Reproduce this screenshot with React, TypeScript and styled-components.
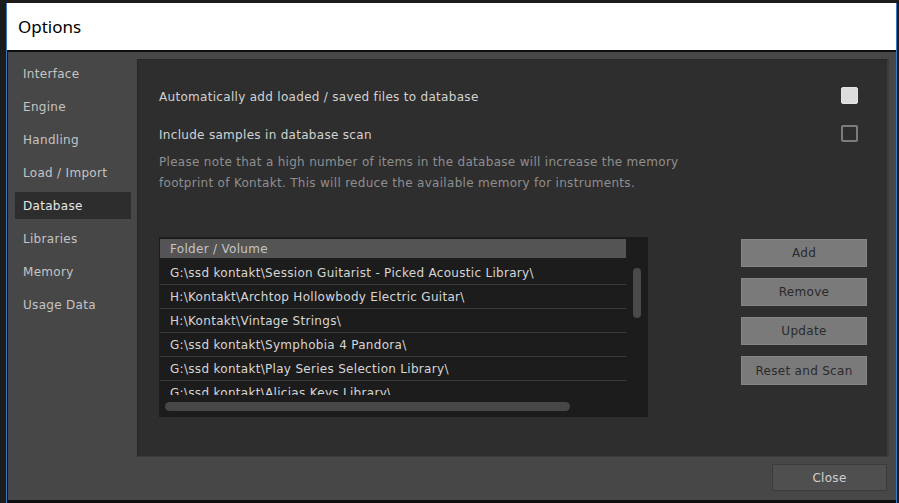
import React from "react";
import styled, { createGlobalStyle } from "styled-components";

const GlobalStyle = createGlobalStyle`
  html, body {
    margin: 0;
    padding: 0;
    background: #1c1c1c;
    overflow: hidden;
  }
`;

const Window = styled.div`
  margin: 3px 0 0 6px;
  width: 891px;
  height: 500px;
  display: flex;
  flex-direction: column;
  border-left: 1px solid #3b78c4;
  border-right: 1px solid #3b78c4;
  box-sizing: border-box;
`;

const TitleBar = styled.div`
  height: 47px;
  flex-shrink: 0;
  background: #ffffff;
  display: flex;
  align-items: center;
  padding-left: 11px;
  font-family: "Noto Sans", "Open Sans", sans-serif;
  font-size: 17px;
  color: #000;
`;

const Body = styled.div`
  flex: 1;
  min-height: 0;
  background: #474747;
  border-top: 2px solid #0e0e0e;
  border-left: 1px solid #0e0e0e;
  border-bottom: 3px solid #0e0e0e;
  display: flex;
  flex-direction: column;
  padding: 7px 7px 9px 0;
  font-family: "DejaVu Sans", sans-serif;
  font-size: 12px;
  letter-spacing: 0.3px;
`;

const Columns = styled.div`
  display: flex;
  height: 400px;
`;

const Sidebar = styled.nav`
  width: 129px;
  flex-shrink: 0;
  display: flex;
  flex-direction: column;
  gap: 6px;
  padding: 1px 6px 0 7px;
  box-sizing: border-box;
`;

const NavItem = styled.div<{ active?: boolean }>`
  height: 27px;
  display: flex;
  align-items: center;
  padding-left: 8px;
  color: ${p => (p.active ? "#e8e8e8" : "#c4c4c4")};
  background: ${p => (p.active ? "#2d2d2d" : "transparent")};
`;

const Panel = styled.section`
  flex: 1;
  min-width: 0;
  background: #2e2e2e;
  border-top: 1px solid #262626;
  border-left: 1px solid #262626;
  border-right: 2px solid #3c3c3c;
  border-bottom: 1px solid #3c3c3c;
  padding: 25px 20px 0 21px;
  box-sizing: border-box;
  display: flex;
  flex-direction: column;
`;

const SettingRow = styled.div`
  height: 24px;
  display: flex;
  align-items: center;
  justify-content: space-between;
  color: #d2d2d2;
  & + & {
    margin-top: 14px;
  }
`;

const Checkbox = styled.div<{ checked?: boolean }>`
  width: 17px;
  height: 17px;
  box-sizing: border-box;
  border-radius: 2px;
  margin: -4px 9px 0 0;
  background: ${p => (p.checked ? "#dcdcdc" : "transparent")};
  border: ${p => (p.checked ? "1px solid #e4e4e4" : "2px solid #7c7c7c")};
`;

const Note = styled.p`
  margin: 5px 0 0;
  line-height: 21px;
  color: #8e8e8e;
  width: 540px;
`;

const Lower = styled.div`
  margin-top: 43px;
  display: flex;
  align-items: flex-start;
  justify-content: space-between;
`;

const ListBox = styled.div`
  width: 489px;
  height: 180px;
  background: #1c1c1c;
  position: relative;
  padding: 2px 0 0 1px;
  box-sizing: border-box;
  overflow: hidden;
  flex-shrink: 0;
`;

const ListHeader = styled.div`
  width: 466px;
  height: 19px;
  background: #545454;
  color: #c4c4c4;
  display: flex;
  align-items: center;
  padding-left: 10px;
  box-sizing: border-box;
`;

const ListRows = styled.div`
  width: 466px;
  height: 135px;
  margin-top: 2px;
  overflow: hidden;
`;

const ListRow = styled.div<{ first?: boolean }>`
  height: ${p => (p.first ? 25 : 24)}px;
  box-sizing: border-box;
  display: flex;
  align-items: center;
  padding: 1px 0 0 10px;
  color: #d6d6d6;
  border-bottom: 1px solid #3a3a3a;
  white-space: nowrap;
`;

const VScroll = styled.div`
  position: absolute;
  left: 474px;
  top: 31px;
  width: 8px;
  height: 50px;
  border-radius: 4px;
  background: #4a4a4a;
`;

const HScroll = styled.div`
  position: absolute;
  left: 6px;
  top: 165px;
  width: 405px;
  height: 9px;
  border-radius: 5px;
  background: #474747;
`;

const ButtonColumn = styled.div`
  margin-top: 2px;
  display: flex;
  flex-direction: column;
  gap: 11px;
`;

const ActionButton = styled.button`
  width: 126px;
  height: 28px;
  background: #7a7a7a;
  border: 1px solid #858585;
  color: #2a2a2a;
  font-family: "DejaVu Sans", sans-serif;
  font-size: 12px;
  letter-spacing: 0.3px;
  padding: 0;
  &:nth-child(4) {
    height: 29px;
  }
`;

const Footer = styled.div`
  display: flex;
  justify-content: flex-end;
  margin-top: 6px;
  padding-right: 2px;
`;

const CloseButton = styled.button`
  width: 115px;
  height: 27px;
  margin-top: 1px;
  background: #4f4f4f;
  border: 1px solid #3b3b3b;
  color: #cfcfcf;
  font-family: "DejaVu Sans", sans-serif;
  font-size: 12px;
  letter-spacing: 0.3px;
  padding: 0;
`;

const navItems = [
  "Interface",
  "Engine",
  "Handling",
  "Load / Import",
  "Database",
  "Libraries",
  "Memory",
  "Usage Data",
];

const folders = [
  "G:\\ssd kontakt\\Session Guitarist - Picked Acoustic Library\\",
  "H:\\Kontakt\\Archtop Hollowbody Electric Guitar\\",
  "H:\\Kontakt\\Vintage Strings\\",
  "G:\\ssd kontakt\\Symphobia 4 Pandora\\",
  "G:\\ssd kontakt\\Play Series Selection Library\\",
  "G:\\ssd kontakt\\Alicias Keys Library\\",
];

export default function App() {
  return (
    <>
      <GlobalStyle />
      <Window>
        <TitleBar>Options</TitleBar>
        <Body>
          <Columns>
            <Sidebar>
              {navItems.map(item => (
                <NavItem key={item} active={item === "Database"}>
                  {item}
                </NavItem>
              ))}
            </Sidebar>
            <Panel>
              <SettingRow>
                Automatically add loaded / saved files to database
                <Checkbox checked />
              </SettingRow>
              <SettingRow>
                Include samples in database scan
                <Checkbox />
              </SettingRow>
              <Note>
                Please note that a high number of items in the database will increase the memory
                footprint of Kontakt. This will reduce the available memory for instruments.
              </Note>
              <Lower>
                <ListBox>
                  <ListHeader>Folder / Volume</ListHeader>
                  <ListRows>
                    {folders.map((f, i) => (
                      <ListRow key={f} first={i === 0}>
                        {f}
                      </ListRow>
                    ))}
                  </ListRows>
                  <VScroll />
                  <HScroll />
                </ListBox>
                <ButtonColumn>
                  <ActionButton>Add</ActionButton>
                  <ActionButton>Remove</ActionButton>
                  <ActionButton>Update</ActionButton>
                  <ActionButton>Reset and Scan</ActionButton>
                </ButtonColumn>
              </Lower>
            </Panel>
          </Columns>
          <Footer>
            <CloseButton>Close</CloseButton>
          </Footer>
        </Body>
      </Window>
    </>
  );
}
